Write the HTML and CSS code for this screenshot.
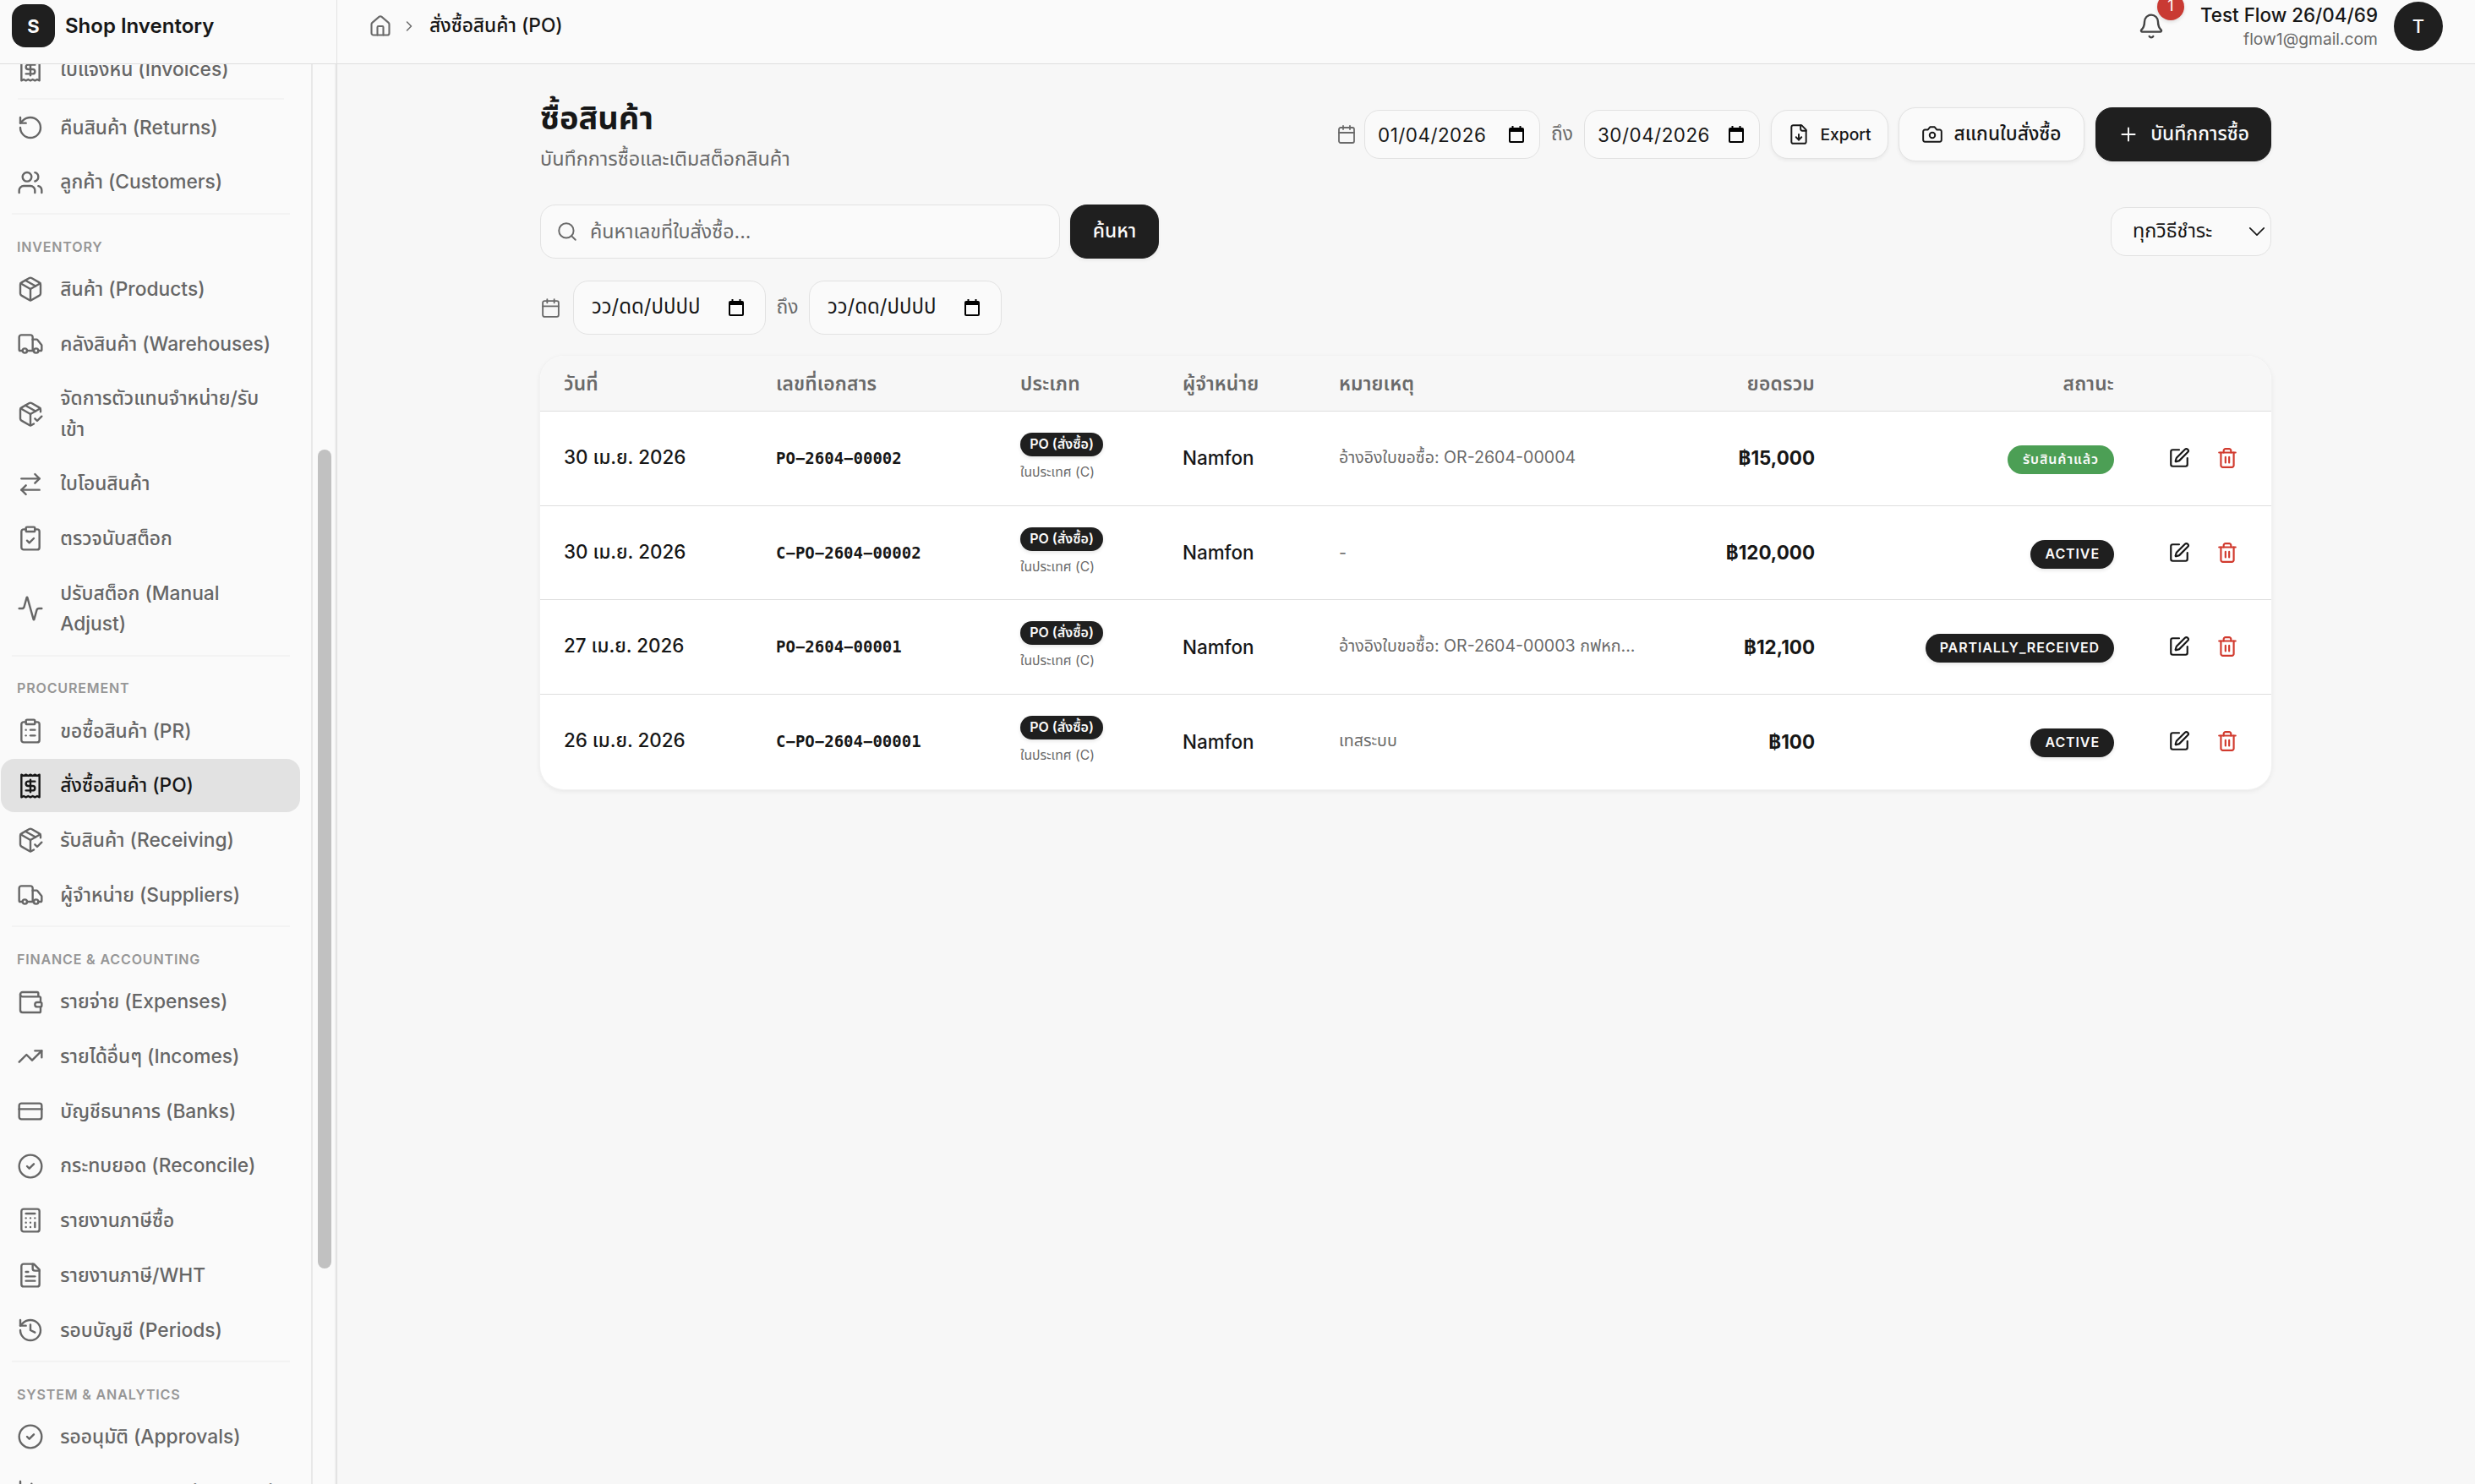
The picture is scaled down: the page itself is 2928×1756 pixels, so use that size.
FILE: index.html
```
<!DOCTYPE html>
<html lang="th">
<head>
    <meta charset="UTF-8">
    <meta name="viewport" content="width=device-width, initial-scale=1.0">
    <title>Shop Inventory</title>
    <link rel="stylesheet" href="styles.css">
</head>
<body>
    <svg class="sprite" xmlns="http://www.w3.org/2000/svg">
        <symbol id="receipt" viewBox="0 0 24 24"><path d="M4 2v20l2-1 2 1 2-1 2 1 2-1 2 1 2-1 2 1V2l-2 1-2-1-2 1-2-1-2 1-2-1-2 1Z"/><path d="M16 8h-6a2 2 0 1 0 0 4h4a2 2 0 1 1 0 4H8"/><path d="M12 17.5v-11"/></symbol>
        <symbol id="returns" viewBox="0 0 24 24"><path d="M3 12a9 9 0 1 0 9-9 9.75 9.75 0 0 0-6.74 2.74L3 8"/><path d="M3 3v5h5"/></symbol>
        <symbol id="users" viewBox="0 0 24 24"><path d="M16 21v-2a4 4 0 0 0-4-4H6a4 4 0 0 0-4 4v2"/><path d="M16 3.13a4 4 0 0 1 0 7.74"/><path d="M22 21v-2a4 4 0 0 0-3-3.87"/><circle cx="9" cy="7" r="4"/></symbol>
        <symbol id="package" viewBox="0 0 24 24"><path d="M11 21.73a2 2 0 0 0 2 0l7-4A2 2 0 0 0 21 16V8a2 2 0 0 0-1-1.73l-7-4a2 2 0 0 0-2 0l-7 4A2 2 0 0 0 3 8v8a2 2 0 0 0 1 1.73z"/><path d="M12 22V12"/><path d="M3.29 7 12 12l8.71-5"/><path d="m7.5 4.27 9 5.15"/></symbol>
        <symbol id="package-check" viewBox="0 0 24 24"><path d="m16 16 2 2 4-4"/><path d="M21 10V8a2 2 0 0 0-1-1.73l-7-4a2 2 0 0 0-2 0l-7 4A2 2 0 0 0 3 8v8a2 2 0 0 0 1 1.73l7 4a2 2 0 0 0 2 0l2-1.14"/><path d="m7.5 4.27 9 5.15"/><path d="M3.29 7 12 12l8.71-5"/><path d="M12 22V12"/></symbol>
        <symbol id="truck" viewBox="0 0 24 24"><path d="M14 18V6a2 2 0 0 0-2-2H4a2 2 0 0 0-2 2v11a1 1 0 0 0 1 1h2"/><path d="M15 18H9"/><path d="M19 18h2a1 1 0 0 0 1-1v-3.65a1 1 0 0 0-.22-.62l-3.48-4.35A1 1 0 0 0 17.52 8H14"/><circle cx="17" cy="18" r="2"/><circle cx="7" cy="18" r="2"/></symbol>
        <symbol id="transfer" viewBox="0 0 24 24"><path d="m16 3 4 4-4 4"/><path d="M20 7H4"/><path d="m8 21-4-4 4-4"/><path d="M4 17h16"/></symbol>
        <symbol id="clipboard-check" viewBox="0 0 24 24"><rect x="8" y="2" width="8" height="4" rx="1"/><path d="M16 4h2a2 2 0 0 1 2 2v14a2 2 0 0 1-2 2H6a2 2 0 0 1-2-2V6a2 2 0 0 1 2-2h2"/><path d="m9 14 2 2 4-4"/></symbol>
        <symbol id="clipboard-list" viewBox="0 0 24 24"><rect x="8" y="2" width="8" height="4" rx="1"/><path d="M16 4h2a2 2 0 0 1 2 2v14a2 2 0 0 1-2 2H6a2 2 0 0 1-2-2V6a2 2 0 0 1 2-2h2"/><path d="M12 11h4"/><path d="M12 16h4"/><path d="M8 11h.01"/><path d="M8 16h.01"/></symbol>
        <symbol id="activity" viewBox="0 0 24 24"><path d="M22 12h-2.48a2 2 0 0 0-1.93 1.46l-2.35 8.36a.25.25 0 0 1-.48 0L9.24 2.18a.25.25 0 0 0-.48 0l-2.35 8.36A2 2 0 0 1 4.49 12H2"/></symbol>
        <symbol id="wallet" viewBox="0 0 24 24"><path d="M19 7V4a1 1 0 0 0-1-1H5a2 2 0 0 0 0 4h15a1 1 0 0 1 1 1v4h-3a2 2 0 0 0 0 4h3a1 1 0 0 0 1-1v-2a1 1 0 0 0-1-1"/><path d="M3 5v14a2 2 0 0 0 2 2h15a1 1 0 0 0 1-1v-4"/></symbol>
        <symbol id="trending" viewBox="0 0 24 24"><path d="M16 7h6v6"/><path d="m22 7-8.5 8.5-5-5L2 17"/></symbol>
        <symbol id="card" viewBox="0 0 24 24"><rect x="2" y="5" width="20" height="14" rx="2"/><path d="M2 10h20"/></symbol>
        <symbol id="circle-check" viewBox="0 0 24 24"><circle cx="12" cy="12" r="10"/><path d="m9 12 2 2 4-4"/></symbol>
        <symbol id="calculator" viewBox="0 0 24 24"><rect x="4" y="2" width="16" height="20" rx="2"/><path d="M8 6h8"/><path d="M16 14v4"/><path d="M16 10h.01M12 10h.01M8 10h.01M12 14h.01M8 14h.01M12 18h.01M8 18h.01"/></symbol>
        <symbol id="file-text" viewBox="0 0 24 24"><path d="M15 2H6a2 2 0 0 0-2 2v16a2 2 0 0 0 2 2h12a2 2 0 0 0 2-2V7Z"/><path d="M14 2v4a2 2 0 0 0 2 2h4"/><path d="M10 9H8"/><path d="M16 13H8"/><path d="M16 17H8"/></symbol>
        <symbol id="file-down" viewBox="0 0 24 24"><path d="M15 2H6a2 2 0 0 0-2 2v16a2 2 0 0 0 2 2h12a2 2 0 0 0 2-2V7Z"/><path d="M14 2v4a2 2 0 0 0 2 2h4"/><path d="M12 18v-6"/><path d="m9 15 3 3 3-3"/></symbol>
        <symbol id="history" viewBox="0 0 24 24"><path d="M3 12a9 9 0 1 0 9-9 9.75 9.75 0 0 0-6.74 2.74L3 8"/><path d="M3 3v5h5"/><path d="M12 7v5l4 2"/></symbol>
        <symbol id="chart" viewBox="0 0 24 24"><path d="M3 3v16a2 2 0 0 0 2 2h16"/><path d="M18 17V9"/><path d="M13 17V5"/><path d="M8 17v-3"/></symbol>
        <symbol id="home" viewBox="0 0 24 24"><path d="M15 21v-8a1 1 0 0 0-1-1h-4a1 1 0 0 0-1 1v8"/><path d="M3 10a2 2 0 0 1 .71-1.53l7-6a2 2 0 0 1 2.58 0l7 6A2 2 0 0 1 21 10v9a2 2 0 0 1-2 2H5a2 2 0 0 1-2-2z"/></symbol>
        <symbol id="chevron-right" viewBox="0 0 24 24"><path d="m9 18 6-6-6-6"/></symbol>
        <symbol id="chevron-down" viewBox="0 0 24 24"><path d="m3 7.5 9 9 9-9"/></symbol>
        <symbol id="bell" viewBox="0 0 24 24"><path d="M10.27 21a2 2 0 0 0 3.46 0"/><path d="M3.26 15.33A1 1 0 0 0 4 17h16a1 1 0 0 0 .74-1.67C19.41 13.96 18 12.5 18 8A6 6 0 0 0 6 8c0 4.5-1.41 5.96-2.74 7.33"/></symbol>
        <symbol id="calendar" viewBox="0 0 24 24"><path d="M8 2v4"/><path d="M16 2v4"/><rect x="3" y="4" width="18" height="18" rx="2"/><path d="M3 10h18"/></symbol>
        <symbol id="camera" viewBox="0 0 24 24"><path d="M14.5 4h-5L7 7H4a2 2 0 0 0-2 2v9a2 2 0 0 0 2 2h16a2 2 0 0 0 2-2V9a2 2 0 0 0-2-2h-3z"/><circle cx="12" cy="13" r="3"/></symbol>
        <symbol id="plus" viewBox="0 0 24 24"><path d="M5 12h14"/><path d="M12 5v14"/></symbol>
        <symbol id="search" viewBox="0 0 24 24"><circle cx="11" cy="11" r="8"/><path d="m21 21-4.3-4.3"/></symbol>
        <symbol id="edit" viewBox="0 0 24 24"><path d="M12 3H5a2 2 0 0 0-2 2v14a2 2 0 0 0 2 2h14a2 2 0 0 0 2-2v-7"/><path d="M18.38 2.63a1 1 0 0 1 3 3l-9.02 9.01a2 2 0 0 1-.85.5l-2.87.84a.5.5 0 0 1-.62-.62l.84-2.87a2 2 0 0 1 .5-.85z"/></symbol>
        <symbol id="trash" viewBox="0 0 24 24"><path d="M3 6h18"/><path d="M19 6v14c0 1-1 2-2 2H7c-1 0-2-1-2-2V6"/><path d="M8 6V4c0-1 1-2 2-2h4c1 0 2 1 2 2v2"/><path d="M10 11v6"/><path d="M14 11v6"/></symbol>
        <symbol id="picker" viewBox="0 0 20 20"><path fill="#000" stroke="none" d="M3 2h1.500V0h2v2h7V0h2v2H17a2 2 0 0 1 2 2v14a2 2 0 0 1-2 2H3a2 2 0 0 1-2-2V4a2 2 0 0 1 2-2zm0 5v11h14V7z"/></symbol>
    </svg>

    <header class="topbar">
        <div class="brand">
            <div class="logo">S</div>
            <span class="brand-name">Shop Inventory</span>
        </div>
        <div class="topbar-main">
            <nav class="breadcrumb">
                <svg class="icon home"><use href="#home"/></svg>
                <svg class="icon sep"><use href="#chevron-right"/></svg>
                <span class="current">สั่งซื้อสินค้า (PO)</span>
            </nav>
            <div class="account">
                <div class="bell">
                    <svg class="icon"><use href="#bell"/></svg>
                    <span class="count">1</span>
                </div>
                <div class="user">
                    <span class="user-name">Test Flow 26/04/69</span>
                    <span class="user-mail">flow1@gmail.com</span>
                </div>
                <div class="avatar">T</div>
            </div>
        </div>
    </header>

    <div class="layout">
        <aside class="sidebar">
            <nav class="menu">
                <a class="item"><svg class="icon"><use href="#receipt"/></svg><span>ใบแจ้งหนี้ (Invoices)</span></a>
                <hr class="inner">
                <a class="item"><svg class="icon"><use href="#returns"/></svg><span>คืนสินค้า (Returns)</span></a>
                <a class="item"><svg class="icon"><use href="#users"/></svg><span>ลูกค้า (Customers)</span></a>
                <hr>
                <h4>INVENTORY</h4>
                <a class="item"><svg class="icon"><use href="#package"/></svg><span>สินค้า (Products)</span></a>
                <a class="item"><svg class="icon"><use href="#truck"/></svg><span>คลังสินค้า (Warehouses)</span></a>
                <a class="item"><svg class="icon"><use href="#package-check"/></svg><span>จัดการตัวแทนจำหน่าย/รับ<br>เข้า</span></a>
                <a class="item"><svg class="icon"><use href="#transfer"/></svg><span>ใบโอนสินค้า</span></a>
                <a class="item"><svg class="icon"><use href="#clipboard-check"/></svg><span>ตรวจนับสต็อก</span></a>
                <a class="item"><svg class="icon"><use href="#activity"/></svg><span>ปรับสต็อก (Manual<br>Adjust)</span></a>
                <hr>
                <h4>PROCUREMENT</h4>
                <a class="item"><svg class="icon"><use href="#clipboard-list"/></svg><span>ขอซื้อสินค้า (PR)</span></a>
                <a class="item active"><svg class="icon"><use href="#receipt"/></svg><span>สั่งซื้อสินค้า (PO)</span></a>
                <a class="item"><svg class="icon"><use href="#package-check"/></svg><span>รับสินค้า (Receiving)</span></a>
                <a class="item"><svg class="icon"><use href="#truck"/></svg><span>ผู้จำหน่าย (Suppliers)</span></a>
                <hr>
                <h4>FINANCE &amp; ACCOUNTING</h4>
                <a class="item"><svg class="icon"><use href="#wallet"/></svg><span>รายจ่าย (Expenses)</span></a>
                <a class="item"><svg class="icon"><use href="#trending"/></svg><span>รายได้อื่นๆ (Incomes)</span></a>
                <a class="item"><svg class="icon"><use href="#card"/></svg><span>บัญชีธนาคาร (Banks)</span></a>
                <a class="item"><svg class="icon"><use href="#circle-check"/></svg><span>กระทบยอด (Reconcile)</span></a>
                <a class="item"><svg class="icon"><use href="#calculator"/></svg><span>รายงานภาษีซื้อ</span></a>
                <a class="item"><svg class="icon"><use href="#file-text"/></svg><span>รายงานภาษี/WHT</span></a>
                <a class="item"><svg class="icon"><use href="#history"/></svg><span>รอบบัญชี (Periods)</span></a>
                <hr>
                <h4>SYSTEM &amp; ANALYTICS</h4>
                <a class="item"><svg class="icon"><use href="#circle-check"/></svg><span>รออนุมัติ (Approvals)</span></a>
                <a class="item"><svg class="icon"><use href="#chart"/></svg><span>รายงานยอดขาย (Reports)</span></a>
            </nav>
            <div class="scrollbar"><div class="thumb"></div></div>
        </aside>

        <main class="content">
            <div class="page-head">
                <div>
                    <h1>ซื้อสินค้า</h1>
                    <p class="subtitle">บันทึกการซื้อและเติมสต็อกสินค้า</p>
                </div>
                <div class="actions">
                    <svg class="icon cal"><use href="#calendar"/></svg>
                    <div class="date small"><span>01/04/2026</span><svg class="picker"><use href="#picker"/></svg></div>
                    <span class="to">ถึง</span>
                    <div class="date small"><span>30/04/2026</span><svg class="picker"><use href="#picker"/></svg></div>
                    <button class="btn export"><svg class="icon"><use href="#file-down"/></svg><span>Export</span></button>
                    <button class="btn scan"><svg class="icon"><use href="#camera"/></svg><span>สแกนใบสั่งซื้อ</span></button>
                    <button class="btn dark create"><svg class="icon"><use href="#plus"/></svg><span>บันทึกการซื้อ</span></button>
                </div>
            </div>

            <div class="filters">
                <div class="search">
                    <div class="search-box"><svg class="icon"><use href="#search"/></svg><span>ค้นหาเลขที่ใบสั่งซื้อ...</span></div>
                    <button class="btn dark find"><span>ค้นหา</span></button>
                </div>
                <div class="select"><span>ทุกวิธีชำระ</span><svg class="icon"><use href="#chevron-down"/></svg></div>
            </div>

            <div class="range">
                <svg class="icon cal"><use href="#calendar"/></svg>
                <div class="date"><span>วว/ดด/ปปปป</span><svg class="picker"><use href="#picker"/></svg></div>
                <span class="to">ถึง</span>
                <div class="date"><span>วว/ดด/ปปปป</span><svg class="picker"><use href="#picker"/></svg></div>
            </div>

            <div class="card">
                <table>
                    <colgroup>
                        <col class="c-date"><col class="c-doc"><col class="c-type"><col class="c-supplier"><col class="c-note"><col class="c-total"><col class="c-status"><col class="c-tools">
                    </colgroup>
                    <thead>
                        <tr>
                            <th>วันที่</th><th>เลขที่เอกสาร</th><th>ประเภท</th><th>ผู้จำหน่าย</th><th>หมายเหตุ</th><th class="right">ยอดรวม</th><th class="right">สถานะ</th><th></th>
                        </tr>
                    </thead>
                    <tbody>
                        <tr>
                            <td>30 เม.ย. 2026</td>
                            <td class="doc">PO−2604−00002</td>
                            <td class="type"><span class="tag">PO (สั่งซื้อ)</span><small>ในประเทศ (C)</small></td>
                            <td>Namfon</td>
                            <td class="note">อ้างอิงใบขอซื้อ: OR-2604-00004</td>
                            <td class="total">฿15,000</td>
                            <td class="right"><span class="status done">รับสินค้าแล้ว</span></td>
                            <td class="tools"><svg class="icon"><use href="#edit"/></svg><svg class="icon del"><use href="#trash"/></svg></td>
                        </tr>
                        <tr>
                            <td>30 เม.ย. 2026</td>
                            <td class="doc">C−PO−2604−00002</td>
                            <td class="type"><span class="tag">PO (สั่งซื้อ)</span><small>ในประเทศ (C)</small></td>
                            <td>Namfon</td>
                            <td class="note">-</td>
                            <td class="total">฿120,000</td>
                            <td class="right"><span class="status">ACTIVE</span></td>
                            <td class="tools"><svg class="icon"><use href="#edit"/></svg><svg class="icon del"><use href="#trash"/></svg></td>
                        </tr>
                        <tr>
                            <td>27 เม.ย. 2026</td>
                            <td class="doc">PO−2604−00001</td>
                            <td class="type"><span class="tag">PO (สั่งซื้อ)</span><small>ในประเทศ (C)</small></td>
                            <td>Namfon</td>
                            <td class="note">อ้างอิงใบขอซื้อ: OR-2604-00003 กฟหก...</td>
                            <td class="total">฿12,100</td>
                            <td class="right"><span class="status">PARTIALLY_RECEIVED</span></td>
                            <td class="tools"><svg class="icon"><use href="#edit"/></svg><svg class="icon del"><use href="#trash"/></svg></td>
                        </tr>
                        <tr>
                            <td>26 เม.ย. 2026</td>
                            <td class="doc">C−PO−2604−00001</td>
                            <td class="type"><span class="tag">PO (สั่งซื้อ)</span><small>ในประเทศ (C)</small></td>
                            <td>Namfon</td>
                            <td class="note">เทสระบบ</td>
                            <td class="total">฿100</td>
                            <td class="right"><span class="status">ACTIVE</span></td>
                            <td class="tools"><svg class="icon"><use href="#edit"/></svg><svg class="icon del"><use href="#trash"/></svg></td>
                        </tr>
                    </tbody>
                </table>
            </div>
        </main>
    </div>
</body>
</html>
```
FILE: styles.css
```
*{
    box-sizing: border-box;
}
body{
    margin: 0;
    height: 1756px;
    overflow: hidden;
    display: flex;
    flex-direction: column;
    background: #f7f7f7;
    color: #171717;
    font-family: Inter, "Noto Sans Thai", sans-serif;
    font-size: 22.75px;
}
.sprite{
    display: none;
}
.icon{
    width: 32px;
    height: 32px;
    flex: none;
    fill: none;
    stroke: currentColor;
    stroke-width: 1.8;
    stroke-linecap: round;
    stroke-linejoin: round;
}
.picker{
    width: 20px;
    height: 20px;
    flex: none;
}

/* top bar */
.topbar{
    display: flex;
    flex: none;
    height: 76px;
    background: #fafafa;
    border-bottom: 1px solid #dedede;
}
.brand{
    display: flex;
    align-items: center;
    gap: 12px;
    width: 399px;
    padding: 0 0 14px 14px;
    border-right: 1px solid #e2e2e2;
}
.logo{
    width: 51px;
    height: 51px;
    border-radius: 16px;
    background: #1f1f1f;
    color: #fafafa;
    display: flex;
    align-items: center;
    justify-content: center;
    font-size: 22px;
    font-weight: 700;
}
.brand-name{
    font-weight: 600;
    font-size: 24px;
}
.topbar-main{
    flex: 1;
    display: flex;
    justify-content: space-between;
    align-items: center;
    padding: 0 38px 14px 37px;
}
.breadcrumb{
    display: flex;
    align-items: center;
    color: #6a6a6a;
}
.home{
    width: 28px;
    height: 28px;
    margin-right: 10px;
}
.sep{
    width: 20px;
    height: 20px;
    margin-right: 14px;
}
.current{
    color: #171717;
    font-weight: 500;
}
.account{
    display: flex;
    align-items: center;
}
.bell{
    position: relative;
    display: flex;
    color: #444;
    margin-right: 42px;
}
.count{
    position: absolute;
    left: 23px;
    top: -23px;
    width: 32px;
    height: 32px;
    border-radius: 50%;
    background: #c93a33;
    color: #fff;
    font-size: 18px;
    line-height: 30px;
    text-align: center;
    box-shadow: 0 2px 4px rgba(0,0,0,.12);
}
.user{
    display: flex;
    flex-direction: column;
    align-items: flex-end;
    line-height: 28px;
    margin: 3px 19px 0 0;
}
.user-name{
    font-weight: 500;
    font-size: 22.4px;
}
.user-mail{
    font-size: 19.25px;
    color: #6a6a6a;
}
.avatar{
    width: 58px;
    height: 58px;
    border-radius: 50%;
    background: #1f1f1f;
    color: #fafafa;
    display: flex;
    align-items: center;
    justify-content: center;
    font-weight: 500;
    font-size: 22px;
}

/* sidebar */
.layout{
    flex: 1;
    display: flex;
    min-height: 0;
}
.sidebar{
    flex: none;
    width: 399px;
    display: flex;
    background: #fafafa;
    border-right: 1px solid #dcdcdc;
    overflow: hidden;
}
.menu{
    width: 368px;
    padding: 0 13px 0 1px;
    margin-top: -25px;
    flex: none;
}
.item{
    display: flex;
    align-items: center;
    gap: 19.3px;
    padding: 13px 19px;
    margin-bottom: 2.3px;
    border-radius: 16px;
    color: #666;
    font-weight: 500;
    line-height: 36.4px;
}
.item span{
    white-space: nowrap;
}
.active{
    background: #e2e2e2;
    color: #171717;
}
hr{
    margin: 5.1px 12px 0 13px;
    border: 0;
    border-top: 2px solid #f3f3f3;
}
hr.inner{
    margin: 0 19px 2px 20px;
}
h4{
    margin: 0;
    padding: 26.6px 19px 8.4px;
    font-size: 16.1px;
    line-height: 22px;
    font-weight: 600;
    letter-spacing: .8px;
    color: #969696;
}
.scrollbar{
    flex: 1;
    border-left: 2px solid #e8e8e8;
    border-right: 2px solid #ededed;
    padding: 456px 4px 0 6px;
}
.thumb{
    height: 969px;
    border-radius: 8px;
    background: #c1c1c1;
}

/* page */
.content{
    flex: 1;
    padding: 36px 241px 0 240px;
}
.page-head{
    display: flex;
    justify-content: space-between;
    height: 130px;
}
h1{
    margin: 0;
    font-size: 38px;
    line-height: 55px;
    font-weight: 700;
}
.subtitle{
    margin: 3px 0 0;
    font-size: 23.4px;
    line-height: 36px;
    color: #6a6a6a;
}
.actions{
    display: flex;
    align-items: center;
    height: 94px;
}
.cal{
    width: 25px;
    height: 25px;
    color: #6a6a6a;
}
.date{
    display: flex;
    align-items: center;
    justify-content: space-between;
    width: 228px;
    height: 64px;
    padding: 0 24px 0 21px;
    border: 1px solid #e2e2e2;
    border-radius: 18px;
    background: #fafafa;
    font-size: 24px;
}
.date.small{
    width: 208px;
    height: 58px;
    padding: 0 17px 0 15px;
    font-size: 22.4px;
    letter-spacing: .5px;
}
.to{
    width: 52px;
    text-align: center;
    color: #6a6a6a;
}
.range .to{
    width: 51px;
}
.actions .cal{
    width: 24px;
    height: 24px;
    margin-right: 9px;
}
.btn{
    display: flex;
    align-items: center;
    font: inherit;
    font-weight: 500;
    color: #171717;
    background: #fafafa;
    border: 1px solid #e2e2e2;
    border-radius: 20px;
    padding: 0;
    justify-content: center;
    box-shadow: 0 2px 4px rgba(0,0,0,.06);
}
.btn .icon{
    width: 26px;
    height: 26px;
}
.btn.dark{
    background: #1f1f1f;
    border-color: #1f1f1f;
    color: #fafafa;
}
.export{
    width: 139px;
    height: 58px;
    margin-left: 13px;
    gap: 12px;
    font-size: 19.25px;
}
.scan{
    width: 220px;
    height: 64px;
    margin-left: 12px;
    gap: 12px;
}
.create{
    width: 208px;
    height: 64px;
    margin-left: 13px;
    gap: 13px;
}
.filters{
    display: flex;
    justify-content: space-between;
    align-items: center;
    height: 64px;
}
.search{
    display: flex;
    gap: 12px;
}
.search-box{
    display: flex;
    align-items: center;
    gap: 14px;
    width: 615px;
    height: 64px;
    padding-left: 18px;
    border: 1px solid #e2e2e2;
    border-radius: 18px;
    background: #fafafa;
    color: #6a6a6a;
    font-size: 23.2px;
}
.search-box .icon{
    width: 26px;
    height: 26px;
}
.find{
    width: 105px;
    height: 64px;
}
.select{
    display: flex;
    align-items: center;
    justify-content: space-between;
    width: 190px;
    height: 58px;
    padding: 0 5px 0 25px;
    border: 1px solid #e2e2e2;
    border-radius: 18px;
    background: #fafafa;
    font-size: 23.4px;
}
.select .icon{
    width: 22px;
    height: 22px;
}
.range{
    display: flex;
    align-items: center;
    height: 64px;
    margin-top: 26px;
}
.range .cal{
    margin-right: 14px;
}

/* table */
.card{
    margin-top: 25px;
    border-radius: 28px;
    overflow: hidden;
    background: #fff;
    box-shadow: 0 0 0 1px #f2f2f2, 0 2px 6px rgba(0,0,0,.08);
}
table{
    width: 2048px;
    table-layout: fixed;
    border-collapse: separate;
    border-spacing: 0;
}
.c-date{ width: 251px; }
.c-doc{ width: 289px; }
.c-type{ width: 192px; }
.c-supplier{ width: 185px; }
.c-note{ width: 412px; }
.c-total{ width: 207px; }
.c-status{ width: 354px; }
th{
    height: 66px;
    padding: 2px 28px 0;
    text-align: left;
    font-weight: 600;
    letter-spacing: .2px;
    color: #6a6a6a;
    background: #f7f7f7;
    border-bottom: 1px solid #dedede;
}
td{
    height: 111.7px;
    padding: 0 28px 1px;
    font-size: 22.4px;
    font-weight: 500;
    border-bottom: 1px solid #dedede;
    white-space: nowrap;
}
tr:last-child td{
    border-bottom: 0;
}
th.right,
td.right,
.total{
    text-align: right;
}
.doc{
    font-family: "DejaVu Sans Mono", monospace;
    font-weight: 700;
    font-size: 19px;
}
.tag{
    display: block;
    width: 98px;
    height: 28px;
    line-height: 27px;
    border-radius: 14px;
    background: #1f1f1f;
    color: #fafafa;
    font-size: 16px;
    font-weight: 600;
    text-align: center;
    box-shadow: 0 2px 4px rgba(0,0,0,.1);
}
.type small{
    display: block;
    margin-top: 5px;
    font-size: 15.7px;
    line-height: 27px;
    font-weight: 400;
    color: #6a6a6a;
}
.note{
    font-size: 19.6px;
    font-weight: 400;
    color: #6a6a6a;
}
.total{
    font-weight: 700;
}
.status{
    display: inline-block;
    height: 34px;
    line-height: 33px;
    margin-top: 4px;
    padding: 0 17px;
    border-radius: 17px;
    background: #1f1f1f;
    color: #fafafa;
    font-size: 16px;
    font-weight: 600;
    letter-spacing: .9px;
    vertical-align: middle;
    box-shadow: 0 2px 4px rgba(0,0,0,.1);
}
.done{
    padding: 0 18px;
    background: #4c9f55;
    box-shadow: none;
}
.tools{
    padding: 0 0 1px 36px;
    font-size: 0;
}
.tools .icon{
    width: 26px;
    height: 26px;
    margin-right: 31px;
    vertical-align: middle;
    stroke-width: 2;
}
.tools .del{
    color: #d13a2e;
    margin-right: 0;
}
```
